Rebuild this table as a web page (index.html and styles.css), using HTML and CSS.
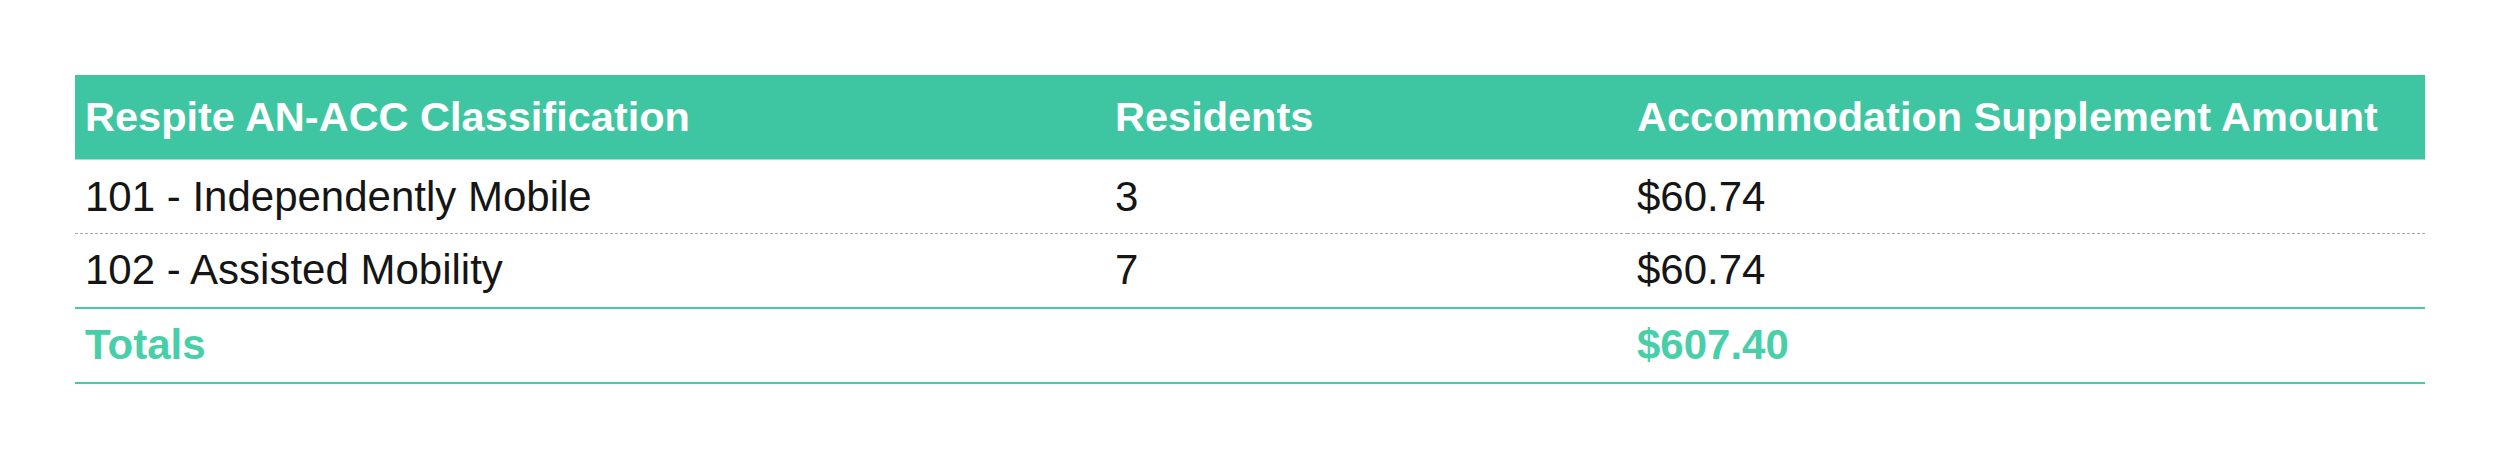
FILE: index.html
```html
<!DOCTYPE html>
<html lang="en">
<head>
<meta charset="utf-8">
<title>Respite AN-ACC Classification</title>
<link rel="stylesheet" href="styles.css">
</head>
<body>
<div class="page">
  <table class="acc">
    <colgroup>
      <col class="col-class">
      <col class="col-res">
      <col class="col-amt">
    </colgroup>
    <thead>
      <tr>
        <th>Respite AN-ACC Classification</th>
        <th>Residents</th>
        <th>Accommodation Supplement Amount</th>
      </tr>
    </thead>
    <tbody>
      <tr class="row row-dotted">
        <td>101 - Independently Mobile</td>
        <td>3</td>
        <td>$60.74</td>
      </tr>
      <tr class="row row-last">
        <td>102 - Assisted Mobility</td>
        <td>7</td>
        <td>$60.74</td>
      </tr>
    </tbody>
    <tfoot>
      <tr class="row row-total">
        <td>Totals</td>
        <td></td>
        <td>$607.40</td>
      </tr>
    </tfoot>
  </table>
</div>
</body>
</html>
```

FILE: styles.css
```css
html, body {
  margin: 0;
  padding: 0;
  background: #ffffff;
}

.page {
  padding: 75px;
}

.acc {
  width: 2350px;
  table-layout: fixed;
  border-collapse: collapse;
  font-family: "Liberation Sans", Arial, Helvetica, sans-serif;
  font-size: 42px;
  color: #151515;
}

.col-class { width: 1030px; }
.col-res { width: 522px; }
.col-amt { width: 798px; }

.acc th {
  box-sizing: border-box;
  height: 84px;
  padding: 0 10px;
  background: #3ec6a2;
  color: #ffffff;
  font-size: 41.5px;
  font-weight: bold;
  text-align: left;
  white-space: nowrap;
  border-bottom: 1px solid #9fe2cf;
}

.acc td {
  height: 73px;
  padding: 0 10px;
  text-align: left;
  white-space: nowrap;
  vertical-align: middle;
}

.row-dotted td {
  background: repeating-linear-gradient(to right, #a9a9a9 0 3px, transparent 3px 5px) left bottom / 100% 1px no-repeat;
  height: 74px;
}

.row-last td {
  border-bottom: 2px solid #46cca6;
}

.row-total td {
  color: #48cfa9;
  font-weight: bold;
  border-bottom: 2px solid #46cca6;
}
```
